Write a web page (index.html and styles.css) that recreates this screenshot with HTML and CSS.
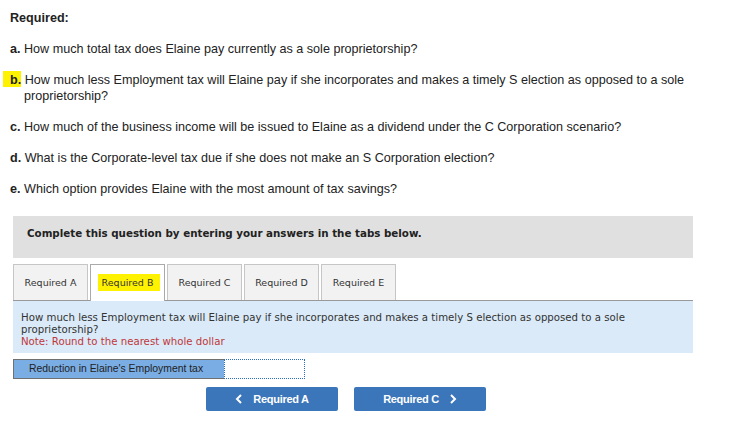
FILE: index.html
```html
<!DOCTYPE html>
<html lang="en">
<head>
    <meta charset="UTF-8">
    <title>Required</title>
    <link rel="stylesheet" href="styles.css">
</head>
<body>
    <div class="page">
        <p class="req">Required:</p>
        <p class="q"><b>a.</b> How much total tax does Elaine pay currently as a sole proprietorship?</p>
        <p class="q"><b class="hl hlb">b.</b> How much less Employment tax will Elaine pay if she incorporates and makes a timely S election as opposed to a sole proprietorship?</p>
        <p class="q"><b>c.</b> How much of the business income will be issued to Elaine as a dividend under the C Corporation scenario?</p>
        <p class="q"><b>d.</b> What is the Corporate-level tax due if she does not make an S Corporation election?</p>
        <p class="q"><b>e.</b> Which option provides Elaine with the most amount of tax savings?</p>

        <div class="box">
            <div class="intro">Complete this question by entering your answers in the tabs below.</div>
            <div class="tabs">
                <div class="tab">Required A</div>
                <div class="tab active"><span class="hl">Required B</span></div>
                <div class="tab">Required C</div>
                <div class="tab">Required D</div>
                <div class="tab">Required E</div>
            </div>
            <div class="panel">
                How much less Employment tax will Elaine pay if she incorporates and makes a timely S election as opposed to a sole proprietorship?
                <div class="note">Note: Round to the nearest whole dollar</div>
            </div>
            <div class="row">
                <div class="label">Reduction in Elaine's Employment tax</div>
                <div class="input"></div>
            </div>
            <div class="nav">
                <div class="btn">
                    <svg width="8" height="10" viewBox="0 0 8 10"><path d="M6 1 L2 5 L6 9" fill="none" stroke="#fff" stroke-width="2"/></svg>
                    Required A
                </div>
                <div class="btn">
                    Required C
                    <svg width="8" height="10" viewBox="0 0 8 10"><path d="M2 1 L6 5 L2 9" fill="none" stroke="#fff" stroke-width="2"/></svg>
                </div>
            </div>
        </div>
    </div>
</body>
</html>
```

FILE: styles.css
```css
body {
    margin: 0;
    background: #fff;
    font-family: "Liberation Sans", Arial, sans-serif;
    color: #222;
}

.page {
    padding: 10px 0 0 10px;
}

p {
    margin: 0;
}

.req {
    font-size: 12.6px;
    font-weight: bold;
    line-height: 16px;
    margin-bottom: 15px;
}

.q {
    font-size: 12.6px;
    line-height: 16px;
    margin-bottom: 15px;
    padding-left: 14px;
    text-indent: -14px;
    width: 690px;
}

.hl {
    background: #fff200;
}

.hlb {
    margin-left: -7px;
    padding: 2px 0 0 7px;
}

.box {
    margin-left: 3px;
    width: 680px;
    margin-top: 19px;
}

.intro {
    background: #e0e0e0;
    height: 42px;
    line-height: 34px;
    padding-left: 14px;
    font-family: "DejaVu Sans", Verdana, sans-serif;
    font-size: 10.3px;
    font-weight: bold;
    color: #222;
    box-sizing: border-box;
}

.tabs {
    display: flex;
    gap: 2px;
    margin-top: 6px;
    border-bottom: 1px solid #999;
    height: 36px;
}

.tab {
    width: 75px;
    box-sizing: border-box;
    height: 36px;
    background: #f2f2f2;
    border: 1px solid #c6c6c6;
    border-bottom: none;
    font-family: "DejaVu Sans", Verdana, sans-serif;
    font-size: 9.5px;
    color: #333;
    text-align: center;
    line-height: 36px;
}

.tab.active {
    background: #fff;
    border-color: #aaa;
    height: 37px;
}

.tab.active .hl {
    padding: 3px 7px 3px 4px;
    margin-left: 3px;
}

.panel {
    background: #daeaf8;
    padding: 11px 8px 6px 8px;
    font-family: "DejaVu Sans", Verdana, sans-serif;
    font-size: 10.2px;
    line-height: 12px;
    color: #333;
    height: 52px;
    box-sizing: border-box;
}

.note {
    color: #c0373a;
}

.row {
    display: flex;
    margin-top: 6px;
    height: 20px;
}

.label {
    width: 211px;
    box-sizing: border-box;
    background: #7aade4;
    border: 1px solid #707070;
    border-right: none;
    font-size: 10.4px;
    line-height: 18px;
    padding-left: 15px;
    color: #222;
}

.input {
    width: 81px;
    box-sizing: border-box;
    border: 1px dotted #2a6cc0;
    background: #fff;
}

.nav {
    display: flex;
    gap: 16px;
    margin-top: 8px;
    padding-left: 193px;
}

.btn {
    width: 132px;
    height: 24px;
    background: #3b76ba;
    border-radius: 2px;
    color: #fff;
    font-weight: bold;
    font-size: 11px;
    letter-spacing: -0.3px;
    display: flex;
    align-items: center;
    justify-content: center;
    gap: 10px;
}
```
